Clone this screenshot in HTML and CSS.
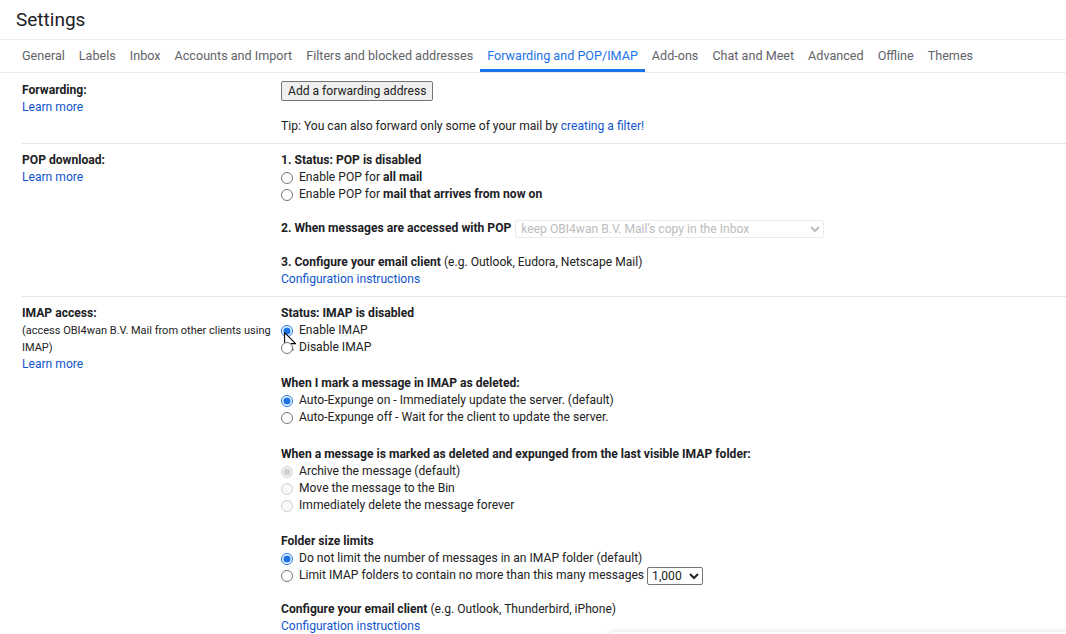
FILE: index.html
```html
<!DOCTYPE html>
<html lang="en">
<head>
    <meta charset="UTF-8">
    <meta name="viewport" content="width=device-width, initial-scale=1.0">
    <title>Settings - Forwarding and POP/IMAP</title>
    <link rel="stylesheet" href="styles.css">
</head>
<body>
<header class="page-title">Settings</header>

<nav class="tabs">
    <a href="#">General</a>
    <a href="#">Labels</a>
    <a href="#">Inbox</a>
    <a href="#">Accounts and Import</a>
    <a href="#">Filters and blocked addresses</a>
    <a href="#" class="active">Forwarding and POP/IMAP</a>
    <a href="#">Add-ons</a>
    <a href="#">Chat and Meet</a>
    <a href="#">Advanced</a>
    <a href="#">Offline</a>
    <a href="#">Themes</a>
</nav>

<div class="settings">
    <div class="row first">
        <div class="label">
            <b>Forwarding:</b>
            <a href="#">Learn more</a>
        </div>
        <div class="content">
            <button class="btn">Add a forwarding address</button>
            <p class="tip">Tip: You can also forward only some of your mail by <a href="#">creating a filter!</a></p>
        </div>
    </div>

    <div class="row">
        <div class="label">
            <b>POP download:</b>
            <a href="#">Learn more</a>
        </div>
        <div class="content">
            <div class="group">
                <b>1. Status: POP is disabled</b>
                <label class="option"><input type="radio" name="pop"> Enable POP for&nbsp;<b>all mail</b></label>
                <label class="option"><input type="radio" name="pop"> Enable POP for&nbsp;<b>mail that arrives from now on</b></label>
            </div>
            <div class="group">
                <div class="line">
                    <b>2. When messages are accessed with POP</b>
                    <select class="pop-select" disabled>
                        <option>keep OBI4wan B.V. Mail's copy in the Inbox</option>
                    </select>
                </div>
            </div>
            <div class="group">
                <div class="line"><b>3. Configure your email client</b>&nbsp;(e.g. Outlook, Eudora, Netscape Mail)</div>
                <a href="#">Configuration instructions</a>
            </div>
        </div>
    </div>

    <div class="row imap">
        <div class="label">
            <b>IMAP access:</b>
            <span class="note">(access OBI4wan B.V. Mail from other clients using IMAP)</span>
            <a href="#">Learn more</a>
        </div>
        <div class="content">
            <div class="group">
                <b>Status: IMAP is disabled</b>
                <label class="option">
                    <input type="radio" name="imap" checked> Enable IMAP
                    <svg class="cursor" width="13" height="20" viewBox="0 0 11 17">
                        <path d="M0.5 0.5 L0.5 13.5 L3.6 10.6 L5.8 15.8 L7.7 15 L5.5 9.9 L9.8 9.9 Z" fill="#fff" stroke="#000" stroke-width="0.9" stroke-linejoin="round"/>
                    </svg>
                </label>
                <label class="option"><input type="radio" name="imap"> Disable IMAP</label>
            </div>
            <div class="group">
                <b>When I mark a message in IMAP as deleted:</b>
                <label class="option"><input type="radio" name="expunge" checked> Auto-Expunge on - Immediately update the server. (default)</label>
                <label class="option"><input type="radio" name="expunge"> Auto-Expunge off - Wait for the client to update the server.</label>
            </div>
            <div class="group wide">
                <b>When a message is marked as deleted and expunged from the last visible IMAP folder:</b>
                <label class="option"><input type="radio" name="deleted" checked disabled> Archive the message (default)</label>
                <label class="option"><input type="radio" name="deleted" disabled> Move the message to the Bin</label>
                <label class="option"><input type="radio" name="deleted" disabled> Immediately delete the message forever</label>
            </div>
            <div class="group">
                <b>Folder size limits</b>
                <label class="option"><input type="radio" name="limit" checked> Do not limit the number of messages in an IMAP folder (default)</label>
                <label class="option"><input type="radio" name="limit"> Limit IMAP folders to contain no more than this many messages
                    <select class="limit-select">
                        <option>1,000</option>
                        <option>2,000</option>
                        <option>5,000</option>
                        <option>10,000</option>
                    </select>
                </label>
            </div>
            <div class="group tight">
                <div class="line"><b>Configure your email client</b>&nbsp;(e.g. Outlook, Thunderbird, iPhone)</div>
                <a href="#">Configuration instructions</a>
            </div>
        </div>
    </div>
</div>

<div class="floating-edge"></div>
</body>
</html>
```

FILE: styles.css
```css
body {
    margin: 0;
    font-family: Roboto, Arial, sans-serif;
    font-size: 12.1px;
    color: #222;
    background-color: #fff;
    overflow: hidden;
}

a {
    color: #1155cc;
    text-decoration: none;
}

b {
    font-weight: bold;
    color: #202124;
}

.page-title {
    height: 39px;
    line-height: 40px;
    padding-left: 16px;
    font-size: 19px;
    color: #202124;
    border-bottom: 1px solid #eceff1;
}

.tabs {
    display: flex;
    height: 32px;
    padding-left: 15px;
    border-bottom: 1px solid #e8eaed;
}

.tabs a {
    padding: 0 7px;
    line-height: 32px;
    font-size: 12.6px;
    color: #5f6368;
    white-space: nowrap;
}

.tabs a.active {
    color: #1a73e8;
    box-shadow: inset 0 -3px 0 #1a73e8;
    border-radius: 3px 3px 0 0;
}

.row {
    display: grid;
    grid-template-columns: 259px 1fr;
    margin-left: 22px;
    padding: 8px 0 8px;
    border-top: 1px solid #e6e6e6;
    line-height: 17px;
}

.row.first {
    border-top: none;
    padding-top: 9px;
}

.label {
    display: flex;
    flex-direction: column;
    align-items: flex-start;
}

.label .note {
    font-size: 11px;
}

.content {
    display: flex;
    flex-direction: column;
    align-items: flex-start;
}

.btn {
    height: 20px;
    margin-top: -1px;
    padding: 0 6px;
    font-family: Roboto, Arial, sans-serif;
    font-size: 12.1px;
    color: #222;
    background-color: #efefef;
    border: 1px solid #767676;
    border-radius: 2px;
}

.tip {
    margin: 17px 0 0;
}

.group {
    display: flex;
    flex-direction: column;
    align-items: flex-start;
}

.group + .group {
    margin-top: 17px;
}

.imap .group + .group {
    margin-top: 19px;
}

.imap .group.wide {
    margin-top: 20px;
}

.imap .group.tight {
    margin-top: 17px;
}

.line,
.option {
    display: flex;
    align-items: center;
    height: 17px;
    white-space: nowrap;
}

.option {
    position: relative;
}

.option input {
    width: 12px;
    height: 12px;
    margin: 0 6px 0 0;
    accent-color: #1a73e8;
}

.option .cursor {
    position: absolute;
    left: 3px;
    top: 10px;
}

.pop-select {
    width: 309px;
    height: 18px;
    margin-left: 4px;
    padding: 0 1px;
    font-family: Roboto, Arial, sans-serif;
    font-size: 12.1px;
    color: #a0a0a0;
    background-color: #fff;
    border: 1px solid #e3e3e3;
    border-radius: 2px;
}

.limit-select {
    width: 56px;
    height: 18px;
    margin-left: 3px;
    padding: 0;
    font-family: Roboto, Arial, sans-serif;
    font-size: 12.1px;
    color: #222;
    background-color: #fff;
    border: 1px solid #767676;
    border-radius: 2px;
}

.floating-edge {
    position: fixed;
    left: 608px;
    right: 0;
    bottom: -12px;
    height: 14px;
    background-color: #fff;
    border-radius: 8px 0 0 0;
    box-shadow: 0 -2px 5px rgba(0, 0, 0, 0.08);
}
```
